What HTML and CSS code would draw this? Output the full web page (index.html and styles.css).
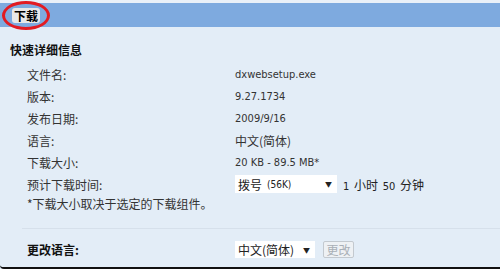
FILE: index.html
```html
<!DOCTYPE html>
<html lang="zh-CN">
<head>
    <meta charset="UTF-8">
    <title>下载</title>
    <link rel="stylesheet" href="styles.css">
</head>
<body>
    <div class="panel">
        <div class="top-strip"></div>
        <div class="header">
            <span class="tab">下载</span>
            <span class="mark"></span>
        </div>

        <div class="content">
            <h2 class="title">快速详细信息</h2>
            <div class="details">
                <div class="label">文件名:</div>
                <div class="value latin">dxwebsetup.exe</div>
                <div class="label">版本:</div>
                <div class="value latin">9.27.1734</div>
                <div class="label">发布日期:</div>
                <div class="value latin">2009/9/16</div>
                <div class="label">语言:</div>
                <div class="value">中文(简体)</div>
                <div class="label">下载大小:</div>
                <div class="value latin">20 KB - 89.5 MB*</div>
                <div class="label">预计下载时间:</div>
                <div class="value">
                    <span class="select speed">拨号 <small class="latin">(56K)</small><i class="arrow">▼</i></span>
                    <span class="time"><span class="latin">1</span> 小时 <span class="latin">50</span> 分钟</span>
                </div>
            </div>
            <p class="note">*下载大小取决于选定的下载组件。</p>
        </div>

        <div class="change">
            <div class="label bold">更改语言:</div>
            <div class="value">
                <span class="select lang">中文(简体)<i class="arrow">▼</i></span>
                <button class="change-btn" disabled>更改</button>
            </div>
        </div>
    </div>
</body>
</html>
```

FILE: styles.css
```css
body {
    margin: 0;
    padding: 0;
    background-color: #e3edf7;
    font-family: "Noto Sans CJK SC", "DejaVu Sans", sans-serif;
    font-size: 12px;
    color: #333;
}

.panel {
    height: 267px;
    border-bottom: 2px solid #111;
    border-bottom-left-radius: 4px;
    overflow: hidden;
}

.top-strip {
    height: 3px;
    background-color: #e9f0f8;
}

.header {
    position: relative;
    height: 24px;
    background-color: #7eaadf;
    padding-left: 12px;
    display: flex;
    align-items: center;
}

.tab {
    display: inline-block;
    height: 15px;
    line-height: 15px;
    padding: 0 2px;
    background-color: #e8e8e8;
    border-radius: 3px;
    font-weight: bold;
    color: #000;
}

/* red annotation circle */
.mark {
    position: absolute;
    left: 2px;
    top: -2px;
    width: 42px;
    height: 23px;
    border: 3px solid #e21b22;
    border-radius: 50%;
}

.content {
    padding: 17px 0 0 10px;
}

.title {
    margin: 0;
    font-size: 12px;
    line-height: 12px;
    font-weight: bold;
    color: #111;
}

.details {
    display: grid;
    grid-template-columns: 208px 1fr;
    grid-auto-rows: 22px;
    margin-top: 7px;
    padding-left: 17px;
    align-items: center;
}

.latin {
    font-family: "DejaVu Sans Condensed", "DejaVu Sans", sans-serif;
    font-size: 11px;
}

.value {
    display: flex;
    align-items: center;
}

.select {
    position: relative;
    display: inline-flex;
    align-items: center;
    height: 18px;
    background-color: #fff;
    padding-left: 3px;
    box-sizing: border-box;
    color: #222;
}

.select small {
    font-size: 10px;
    margin-left: 5px;
}

.arrow {
    position: absolute;
    right: 5px;
    font-style: normal;
    font-size: 7px;
    color: #222;
}

.speed {
    width: 102px;
}

.time {
    margin-left: 6px;
    color: #222;
    word-spacing: 2px;
}

.note {
    margin: 2px 0 0 17px;
    line-height: 14px;
}

.change {
    display: grid;
    grid-template-columns: 208px 1fr;
    align-items: center;
    margin: 17px 0 0 22px;
    padding: 12px 0 0 5px;
    border-top: 1px solid #d6e0eb;
}

.bold {
    font-weight: bold;
    color: #111;
}

.lang {
    width: 80px;
    height: 17px;
}

.change-btn {
    margin-left: 8px;
    height: 17px;
    width: 31px;
    padding: 0;
    border: 1px solid #c3c9cf;
    border-radius: 2px;
    background-color: #eef1f4;
    color: #a9afb6;
    font-family: inherit;
    font-size: 12px;
    line-height: 14px;
}
```
